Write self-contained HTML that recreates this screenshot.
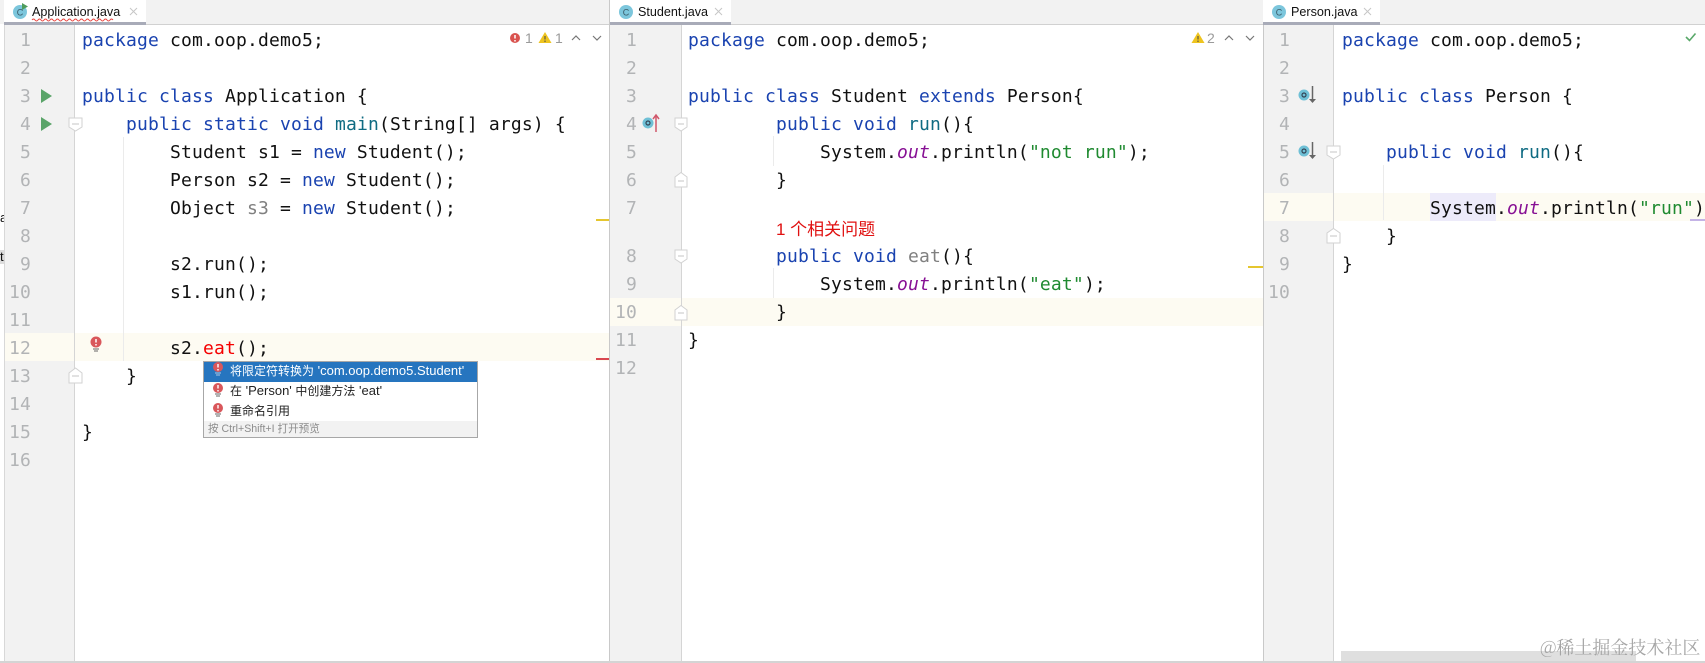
<!DOCTYPE html>
<html><head><meta charset="utf-8"><style>
html,body{margin:0;padding:0;background:#fff}
body{width:1705px;height:663px;position:relative;overflow:hidden}
div,svg,span.a{position:absolute}
.l{font:18px/28px "DejaVu Sans Mono","Liberation Mono",monospace;letter-spacing:.16px;white-space:pre;color:#111;height:28px;margin-top:1px}
.n{font:18px/28px "DejaVu Sans Mono","Liberation Mono",monospace;letter-spacing:.16px;color:#b2b4b6;width:30px;text-align:right;height:28px;margin-top:1px}
i{font-style:normal}
.k{color:#1a43b0}.m{color:#0f6b82}.s{color:#1f8a30}.o{color:#871094;font-style:italic}.g{color:#808080}.r{color:#f50000}
.tabt{font:12.6px/25px "Liberation Sans",sans-serif;color:#111;height:24px;white-space:pre;top:0}
.pop{font:13px/20px "Liberation Sans","Noto Sans CJK SC",sans-serif;white-space:pre;left:230px;height:20px;color:#222}
.pop b{font-weight:normal;font-size:12px}
</style></head><body>
<!-- backgrounds -->
<div style="left:0;top:0;width:1705px;height:24px;background:#f2f2f2"></div>
<div style="left:4px;top:24px;width:1701px;height:1px;background:#d1d1d1"></div>
<div style="left:4px;top:25px;width:70px;height:636px;background:#f2f2f2"></div>
<div style="left:610px;top:25px;width:71px;height:636px;background:#f2f2f2"></div>
<div style="left:1263px;top:25px;width:70px;height:636px;background:#f2f2f2"></div>
<!-- current lines -->
<div style="left:4px;top:333px;width:606px;height:28px;background:#fdfbf2"></div>
<div style="left:610px;top:298px;width:653px;height:28px;background:#fdfbf2"></div>
<div style="left:1263px;top:193px;width:442px;height:28px;background:#fdfbf2"></div>
<div style="left:1430px;top:193px;width:66px;height:28px;background:#edebfa"></div>
<!-- borders -->
<div style="left:4px;top:0;width:1px;height:663px;background:#d8d8d8"></div>
<div style="left:74px;top:25px;width:1px;height:636px;background:#d5d5d5"></div>
<div style="left:609px;top:0;width:1px;height:663px;background:#c9c9c9"></div>
<div style="left:681px;top:25px;width:1px;height:636px;background:#d5d5d5"></div>
<div style="left:1263px;top:0;width:1px;height:663px;background:#c9c9c9"></div>
<div style="left:1333px;top:25px;width:1px;height:636px;background:#d5d5d5"></div>
<div style="left:0;top:661px;width:1705px;height:2px;background:#d4d4d4"></div>
<!-- left sliver -->
<div style="left:0;top:212px;width:4px;height:12px;overflow:hidden;font:13px/12px 'Liberation Sans',sans-serif;color:#111">a</div>
<div style="left:0;top:250px;width:4px;height:14px;background:#ddd;overflow:hidden;font:13px/14px 'Liberation Sans',sans-serif;color:#111">t</div>
<!-- tabs -->
<div style="left:4px;top:0;width:142px;height:22px;background:#fff"></div>
<div style="left:4px;top:22px;width:142px;height:3px;background:#a8abb8"></div>
<div style="left:610px;top:0;width:121px;height:22px;background:#fff"></div>
<div style="left:610px;top:22px;width:121px;height:3px;background:#a8abb8"></div>
<div style="left:1263px;top:0;width:117px;height:22px;background:#fff"></div>
<div style="left:1263px;top:22px;width:117px;height:3px;background:#a8abb8"></div>
<svg style="left:0;top:0" width="1705" height="30">
<circle cx="20" cy="12" r="7" fill="#7cc6dc"/><path d="M22 3l6 3.500-6 3.500z" fill="#4f9d5c"/>
<text x="20" y="15.500" font-size="9" font-family="Liberation Sans" text-anchor="middle" fill="#3a5a68">C</text>
<circle cx="626" cy="12" r="7" fill="#7cc6dc"/><text x="626" y="15.500" font-size="9" font-family="Liberation Sans" text-anchor="middle" fill="#3a5a68">C</text>
<circle cx="1279" cy="12" r="7" fill="#7cc6dc"/><text x="1279" y="15.500" font-size="9" font-family="Liberation Sans" text-anchor="middle" fill="#3a5a68">C</text>
<path d="M130 8l7 7m0-7l-7 7M715 8l7 7m0-7l-7 7M1364 8l7 7m0-7l-7 7" stroke="#c6c6c6" stroke-width="1" fill="none"/>
<path d="M32 20q1.500-2 3 0t3 0 3 0 3 0 3 0 3 0 3 0 3 0 3 0 3 0 3 0 3 0 3 0 3 0 3 0 3 0 3 0 3 0 3 0 3 0 3 0 3 0 3 0 3 0 3 0 3 0 3 0" stroke="#e8413c" stroke-width="1" fill="none"/>
</svg>
<div class="tabt" style="left:32px">Application.java</div>
<div class="tabt" style="left:638px">Student.java</div>
<div class="tabt" style="left:1291px">Person.java</div>

<!-- line numbers 1 -->
<div class="n" style="left:1px;top:26px">1</div><div class="n" style="left:1px;top:54px">2</div><div class="n" style="left:1px;top:82px">3</div><div class="n" style="left:1px;top:110px">4</div><div class="n" style="left:1px;top:138px">5</div><div class="n" style="left:1px;top:166px">6</div><div class="n" style="left:1px;top:194px">7</div><div class="n" style="left:1px;top:222px">8</div><div class="n" style="left:1px;top:250px">9</div><div class="n" style="left:1px;top:278px">10</div><div class="n" style="left:1px;top:306px">11</div><div class="n" style="left:1px;top:334px">12</div><div class="n" style="left:1px;top:362px">13</div><div class="n" style="left:1px;top:390px">14</div><div class="n" style="left:1px;top:418px">15</div><div class="n" style="left:1px;top:446px">16</div>
<!-- code 1 -->
<div class="l" style="left:82px;top:26px"><i class="k">package</i> com.oop.demo5;</div>
<div class="l" style="left:82px;top:82px"><i class="k">public class</i> Application {</div>
<div class="l" style="left:82px;top:110px">    <i class="k">public static void</i> <i class="m">main</i>(String[] args) {</div>
<div class="l" style="left:82px;top:138px">        Student s1 = <i class="k">new</i> Student();</div>
<div class="l" style="left:82px;top:166px">        Person s2 = <i class="k">new</i> Student();</div>
<div class="l" style="left:82px;top:194px">        Object <i class="g">s3</i> = <i class="k">new</i> Student();</div>
<div class="l" style="left:82px;top:250px">        s2.run();</div>
<div class="l" style="left:82px;top:278px">        s1.run();</div>
<div class="l" style="left:82px;top:334px">        s2.<i class="r">eat</i>();</div>
<div class="l" style="left:82px;top:362px">    }</div>
<div class="l" style="left:82px;top:418px">}</div>

<!-- line numbers 2 -->
<div class="n" style="left:607px;top:26px">1</div><div class="n" style="left:607px;top:54px">2</div><div class="n" style="left:607px;top:82px">3</div><div class="n" style="left:607px;top:110px">4</div><div class="n" style="left:607px;top:138px">5</div><div class="n" style="left:607px;top:166px">6</div><div class="n" style="left:607px;top:194px">7</div><div class="n" style="left:607px;top:242px">8</div><div class="n" style="left:607px;top:270px">9</div><div class="n" style="left:607px;top:298px">10</div><div class="n" style="left:607px;top:326px">11</div><div class="n" style="left:607px;top:354px">12</div>
<!-- code 2 -->
<div class="l" style="left:688px;top:26px"><i class="k">package</i> com.oop.demo5;</div>
<div class="l" style="left:688px;top:82px"><i class="k">public class</i> Student <i class="k">extends</i> Person{</div>
<div class="l" style="left:688px;top:110px">        <i class="k">public void</i> <i class="m">run</i>(){</div>
<div class="l" style="left:688px;top:138px">            System.<i class="o">out</i>.println(<i class="s">"not run"</i>);</div>
<div class="l" style="left:688px;top:166px">        }</div>
<div style="left:776px;top:218px;font:17px/24px 'Liberation Sans','Noto Sans CJK SC',sans-serif;color:#e01010;white-space:pre">1 个相关问题</div>
<div class="l" style="left:688px;top:242px">        <i class="k">public void</i> <i class="g">eat</i>(){</div>
<div class="l" style="left:688px;top:270px">            System.<i class="o">out</i>.println(<i class="s">"eat"</i>);</div>
<div class="l" style="left:688px;top:298px">        }</div>
<div class="l" style="left:688px;top:326px">}</div>

<!-- line numbers 3 -->
<div class="n" style="left:1260px;top:26px">1</div><div class="n" style="left:1260px;top:54px">2</div><div class="n" style="left:1260px;top:82px">3</div><div class="n" style="left:1260px;top:110px">4</div><div class="n" style="left:1260px;top:138px">5</div><div class="n" style="left:1260px;top:166px">6</div><div class="n" style="left:1260px;top:194px">7</div><div class="n" style="left:1260px;top:222px">8</div><div class="n" style="left:1260px;top:250px">9</div><div class="n" style="left:1260px;top:278px">10</div>
<!-- code 3 -->
<div class="l" style="left:1342px;top:26px"><i class="k">package</i> com.oop.demo5;</div>
<div class="l" style="left:1342px;top:82px"><i class="k">public class</i> Person {</div>
<div class="l" style="left:1342px;top:138px">    <i class="k">public void</i> <i class="m">run</i>(){</div>
<div class="l" style="left:1342px;top:194px">        System.<i class="o">out</i>.println(<i class="s">"run"</i>)</div>
<div class="l" style="left:1342px;top:222px">    }</div>
<div class="l" style="left:1342px;top:250px">}</div>

<!-- overlay icons -->
<svg style="left:0;top:0" width="1705" height="663" font-family="Liberation Sans">
<!-- indent guides -->
<path d="M123.500 137V361M773.500 136V166M773.500 268V298M1383.500 165V220" stroke="#ebebeb" fill="none"/>
<!-- run -->
<path d="M41 89l11 7-11 7zM41 117l11 7-11 7z" fill="#5aa469"/>
<!-- folds -->
<g fill="#fff" stroke="#d2d2d2">
<path d="M69 118h13v9l-6.500 4-6.500-4z"/><path d="M69 383v-10l6.500-5 6.500 5v10z"/>
<path d="M675 118h12v9l-6 4-6-4zM675 250h12v9l-6 4-6-4zM675 187v-10l6-4.500 6 4.500v10zM675 320v-10l6-4.500 6 4.500v10z"/>
<path d="M1327 146h13v9l-6.500 4-6.500-4zM1327 243v-10l6.500-4.500 6.500 4.500v10z"/>
</g>
<path d="M72 124h7M72 376h7M678 124h6M678 256h6M678 181h6M678 313h6M1330 152h7M1330 236h7" stroke="#c4c4c4"/>
<!-- overriding -->
<g>
<circle cx="648" cy="123" r="5.500" fill="#6fc0d6"/><circle cx="648" cy="123" r="2" fill="none" stroke="#345" stroke-width="1.200"/>
<path d="M656 132V116M653 119l3-4 3 4" stroke="#d0576b" stroke-width="1.500" fill="none"/>
<circle cx="1304" cy="95" r="5.500" fill="#6fc0d6"/><circle cx="1304" cy="95" r="2" fill="none" stroke="#345" stroke-width="1.200"/>
<path d="M1312.500 86V102" stroke="#666" stroke-width="1.500"/><path d="M1309 99h7l-3.500 4z" fill="#666"/>
<circle cx="1304" cy="151" r="5.500" fill="#6fc0d6"/><circle cx="1304" cy="151" r="2" fill="none" stroke="#345" stroke-width="1.200"/>
<path d="M1312.500 142V158" stroke="#666" stroke-width="1.500"/><path d="M1309 155h7l-3.500 4z" fill="#666"/>
</g>
<!-- inspection widget -->
<circle cx="515" cy="38" r="5" fill="#d9534f"/><path d="M515 35v3.500M515 40v1.500" stroke="#fff" stroke-width="1.500"/>
<text x="525" y="43" font-size="14" fill="#9a9a9a">1</text>
<path d="M545 32l6.500 11h-13z" fill="#eec41f"/><path d="M545 36v3.500M545 40.500v1.500" stroke="#444" stroke-width="1"/>
<text x="555" y="43" font-size="14" fill="#9a9a9a">1</text>
<path d="M572 40l4-4 4 4M593 36l4 4 4-4" stroke="#777" stroke-width="1.200" fill="none"/>
<path d="M1198 32l6.500 11h-13z" fill="#eec41f"/><path d="M1198 36v3.500M1198 40.500v1.500" stroke="#444" stroke-width="1"/>
<text x="1207" y="43" font-size="14" fill="#9a9a9a">2</text>
<path d="M1225 40l4-4 4 4M1246 36l4 4 4-4" stroke="#777" stroke-width="1.200" fill="none"/>
<path d="M1686 37l3.500 3.500 6-7" stroke="#59a869" stroke-width="1.600" fill="none"/>
<!-- stripes -->
<rect x="596" y="219" width="13" height="2" fill="#e5c62f"/>
<rect x="596" y="358" width="13" height="2" fill="#d9474f"/>
<rect x="1248" y="266" width="15" height="2" fill="#e5c62f"/>
<rect x="1690" y="219" width="15" height="2" fill="#c4b3e6"/>
<!-- bulb -->
<circle cx="96" cy="342" r="5.500" fill="#d9575b"/><path d="M96 339v3.500M96 344v1.500" stroke="#fff" stroke-width="1.500"/><path d="M93 349h6M94 351h4" stroke="#666"/>
</svg>

<!-- popup -->
<div style="left:203px;top:361px;width:273px;height:75px;background:#fff;border:1px solid #a7a7a7"></div>
<div style="left:204px;top:362px;width:273px;height:20px;background:#2675bf"></div>
<div style="left:204px;top:421px;width:273px;height:16px;background:#f2f2f2"></div>
<div class="pop" style="top:361px;color:#fff"><b>将限定符转换为</b> 'com.oop.demo5.Student'</div>
<div class="pop" style="top:381px"><b>在</b> 'Person' <b>中创建方法</b> 'eat'</div>
<div class="pop" style="top:401px"><b>重命名引用</b></div>
<div class="pop" style="left:208px;top:421px;height:16px;font-size:10.6px;line-height:17px;color:#8c8c8c">按 Ctrl+Shift+I 打开预览</div>
<svg style="left:0;top:0" width="1705" height="663">
<circle cx="218" cy="367" r="5" fill="#d9575b"/><path d="M218 364v3.500M218 369v1.500" stroke="#fff" stroke-width="1.400"/>
<path d="M215 373h6M216 375h4" stroke="#a9c8e6"/>
<circle cx="218" cy="388" r="5" fill="#d9575b"/><path d="M218 385v3.500M218 390v1.500" stroke="#fff" stroke-width="1.400"/>
<path d="M215 394h6M216 396h4" stroke="#666"/>
<circle cx="218" cy="408" r="5" fill="#d9575b"/><path d="M218 405v3.500M218 410v1.500" stroke="#fff" stroke-width="1.400"/>
<path d="M215 414h6M216 416h4" stroke="#666"/>
</svg>

<!-- scrollbar + watermark -->
<div style="left:1341px;top:651px;width:295px;height:10px;background:#dfdfdf"></div>
<div style="left:1540px;top:634px;font:18px/26px 'Noto Serif CJK SC','Noto Sans CJK SC',serif;color:#a5a5a5;white-space:pre">@稀土掘金技术社区</div>
</body></html>
